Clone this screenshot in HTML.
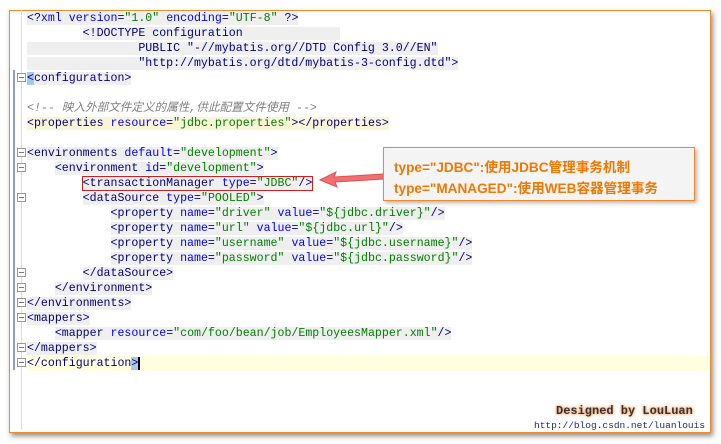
<!DOCTYPE html>
<html><head><style>
body{margin:0;width:721px;height:444px;background:#fff;position:relative;overflow:hidden;font-family:"Liberation Mono",monospace;}
#frame{position:absolute;left:9px;top:10px;width:700px;height:421px;border:1px solid #f08a2a;box-shadow:2px 3px 5px rgba(0,0,0,.45);background:#fff;}
.gut{position:absolute;left:13px;top:70px;width:2px;height:300px;background:#8aa0c0;}
.gl{position:absolute;left:21px;top:10px;width:1px;height:420px;background:#ddd;}
.l{position:absolute;left:27px;height:15px;line-height:15px;font-size:11.6px;white-space:pre;color:#000080;}
.l span.b{background:#efefef;}
.a{color:#0000ff}.v{color:#008000}.c{color:#808080;font-style:italic}
.y{background:#faf5d6}
.f{position:absolute;left:17px;width:7px;height:7px;border:1px solid #999;background:#fff;}
.f::after{content:"";position:absolute;left:1px;top:3px;width:5px;height:1px;background:#777;}
#call{position:absolute;left:383px;top:147px;width:310px;height:52px;border:1px solid #f08a2a;background:#f4f4f4;box-shadow:2px 2px 4px rgba(0,0,0,.3);font-family:"Liberation Sans","Noto Sans CJK SC",sans-serif;font-weight:bold;font-size:13.6px;color:#f07800;}
#call div{position:absolute;left:10px;}
</style></head><body>
<div id="frame"></div>
<div class="gut"></div>
<div class="gl"></div>
<div class="l" style="top:11px"><span class="b">&lt;?<span class="a">xml version</span>=<span class="v">"1.0"</span> <span class="a">encoding</span>=<span class="v">"UTF-8"</span> ?&gt;</span></div>
<div class="l" style="top:26px"><span style="background:#fff">        </span><span class="b">&lt;!DOCTYPE configuration              </span></div>
<div class="l" style="top:41px"><span class="b">                PUBLIC "-//mybatis.org//DTD Config 3.0//EN"</span></div>
<div class="l" style="top:56px"><span class="b">                "http://mybatis.org/dtd/mybatis-3-config.dtd"&gt;</span></div>
<div class="f" style="top:73px"></div>
<div class="l" style="top:71px"><span class="b"><span style="background:#a6c8f0">&lt;</span>configuration&gt;</span></div>
<div class="l c" style="top:101px;font-family:'Liberation Mono','Noto Sans CJK SC',monospace">&lt;!-- 映入外部文件定义的属性,供此配置文件使用 --&gt;</div>
<div class="l" style="top:116px"><span class="y">&lt;properties <span class="a">resource</span>=<span class="v">"jdbc.properties"</span>&gt;&lt;/properties&gt;</span></div>
<div class="f" style="top:148px"></div>
<div class="l" style="top:146px"><span class="b">&lt;environments <span class="a">default</span>=<span class="v">"development"</span>&gt;</span></div>
<div class="f" style="top:163px"></div>
<div class="l" style="top:161px">    <span class="b">&lt;environment <span class="a">id</span>=<span class="v">"development"</span>&gt;</span></div>
<div class="l" style="top:176px">        <span class="b" style="outline:1px solid #d02020">&lt;transactionManager <span class="a">type</span>=<span class="v">"JDBC"</span>/&gt;</span></div>
<div class="f" style="top:193px"></div>
<div class="l" style="top:191px">        <span class="b">&lt;dataSource <span class="a">type</span>=<span class="v">"POOLED"</span>&gt;</span></div>
<div class="l" style="top:206px">            <span class="b">&lt;property <span class="a">name</span>=<span class="v">"driver"</span> <span class="a">value</span>=<span class="v">"${jdbc.driver}"</span>/&gt;</span></div>
<div class="l" style="top:221px">            <span class="b">&lt;property <span class="a">name</span>=<span class="v">"url"</span> <span class="a">value</span>=<span class="v">"${jdbc.url}"</span>/&gt;</span></div>
<div class="l" style="top:236px">            <span class="b">&lt;property <span class="a">name</span>=<span class="v">"username"</span> <span class="a">value</span>=<span class="v">"${jdbc.username}"</span>/&gt;</span></div>
<div class="l" style="top:251px">            <span class="b">&lt;property <span class="a">name</span>=<span class="v">"password"</span> <span class="a">value</span>=<span class="v">"${jdbc.password}"</span>/&gt;</span></div>
<div class="f" style="top:268px"></div>
<div class="l" style="top:266px">        <span class="b">&lt;/dataSource&gt;</span></div>
<div class="f" style="top:283px"></div>
<div class="l" style="top:281px">    <span class="b">&lt;/environment&gt;</span></div>
<div class="f" style="top:298px"></div>
<div class="l" style="top:296px"><span class="b">&lt;/environments&gt;</span></div>
<div class="f" style="top:313px"></div>
<div class="l" style="top:311px"><span class="b">&lt;mappers&gt;</span></div>
<div class="l" style="top:326px">    <span class="b">&lt;mapper <span class="a">resource</span>=<span class="v">"com/foo/bean/job/EmployeesMapper.xml"</span>/&gt;</span></div>
<div class="f" style="top:343px"></div>
<div class="l" style="top:341px"><span class="b">&lt;/mappers&gt;</span></div>
<div style="position:absolute;left:27px;top:356px;width:682px;height:15px;background:#ffffe0"></div>
<div class="f" style="top:358px"></div>
<div class="l" style="top:356px">&lt;/configuration<span style="background:#a6c8f0">&gt;</span><span style="border-left:2px solid #000"></span></div>
<svg style="position:absolute;left:318px;top:166px" width="68" height="22"><path d="M2 14 L18 6 L16 11 L66 8 L66 13 L17 16 L19 21 Z" fill="#f07070" stroke="#e05050"/></svg>
<div id="call"><div style="top:8px">type="JDBC":使用JDBC管理事务机制</div><div style="top:29px">type="MANAGED":使用WEB容器管理事务</div></div>
<div style="position:absolute;left:556px;top:404px;font-size:12px;font-weight:bold;color:#333;text-shadow:0 0 3px #f8a060,0 0 3px #f8a060">Designed by LouLuan</div>
<div style="position:absolute;left:534px;top:420px;font-size:9.5px;color:#203060">http://blog.csdn.net/luanlouis</div>
</body></html>
